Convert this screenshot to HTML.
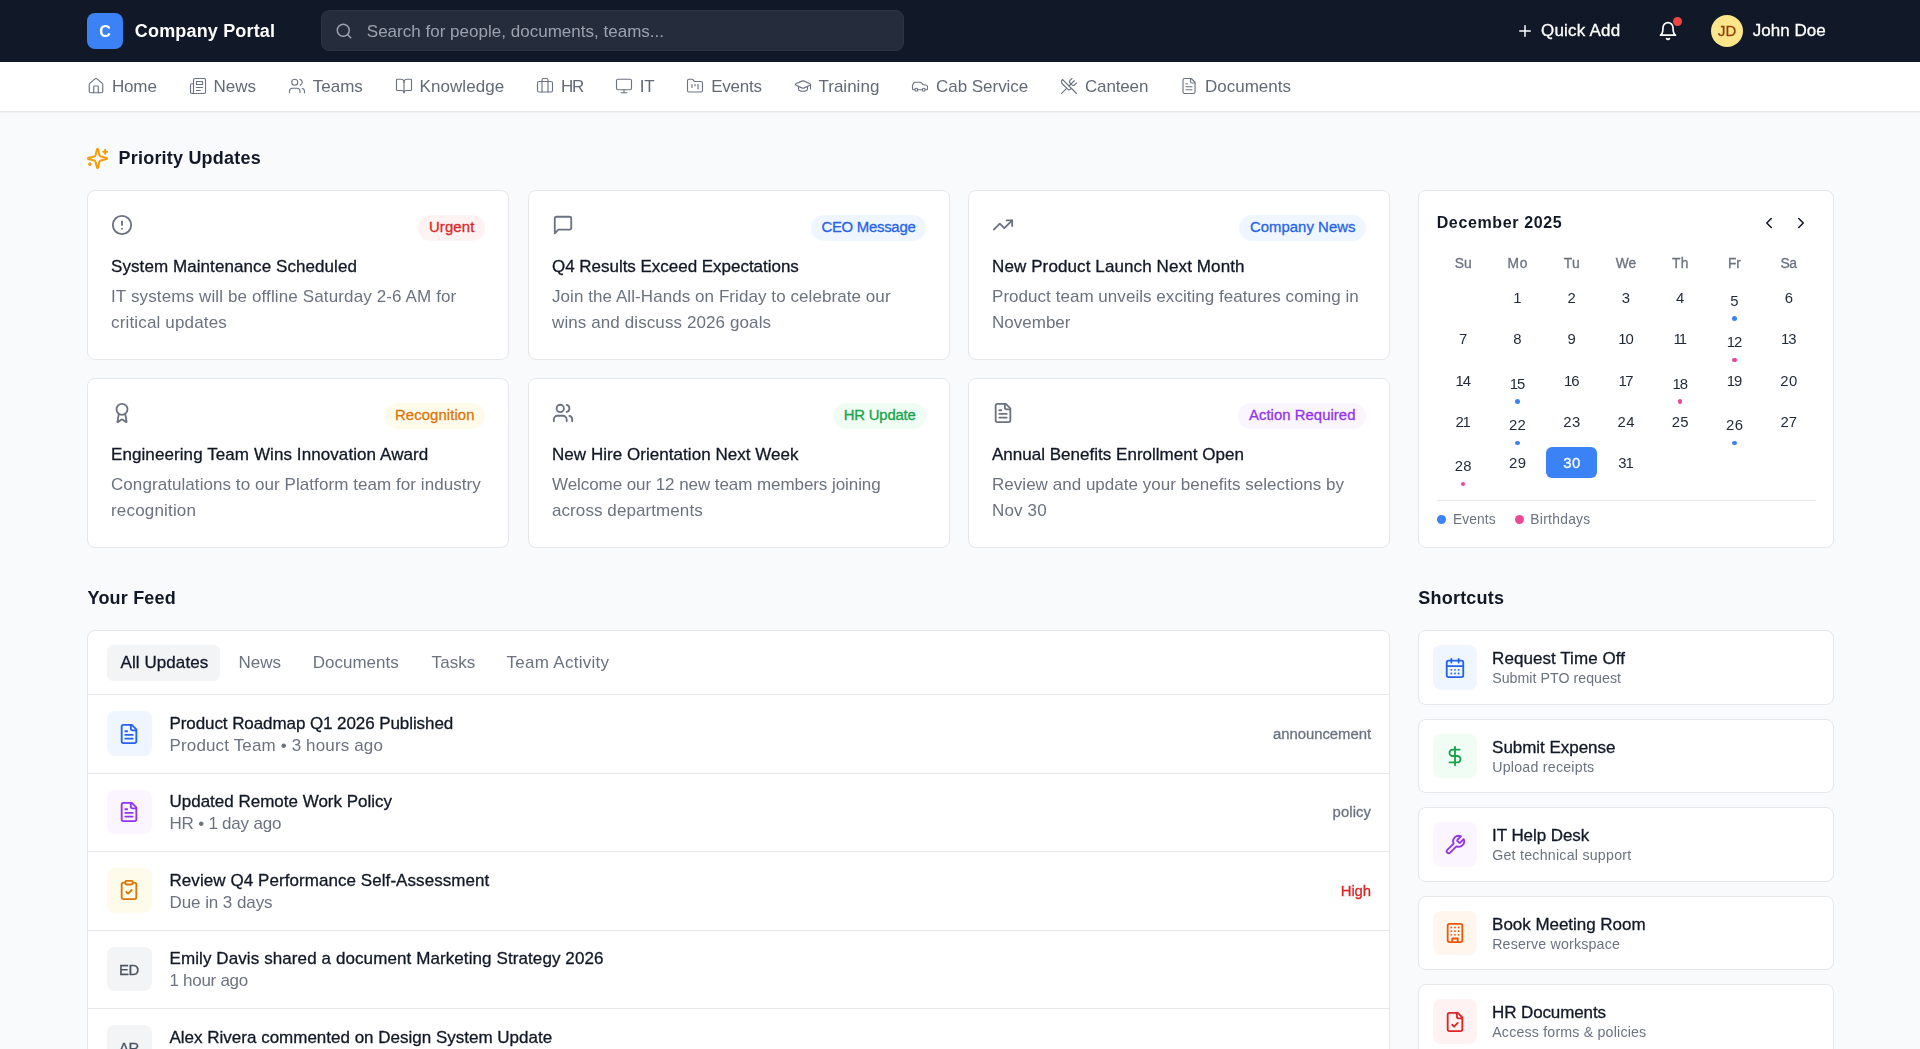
<!DOCTYPE html>
<html><head><meta charset="utf-8"><title>Company Portal</title>
<style>
html,body{margin:0;padding:0;width:1920px;height:1049px;overflow:hidden;background:#f8fafc;font-family:"Liberation Sans",sans-serif;}
#root{position:relative;width:1920px;height:1049px;overflow:hidden;}
#txt{position:absolute;left:0;top:0;width:1920px;height:1049px;will-change:transform;}
#root span{position:absolute;white-space:pre;font-family:"Liberation Sans",sans-serif;}
</style></head><body><div id="root">
<div style="position:absolute;left:0px;top:0px;width:1920px;height:62px;background:#111827;border-radius:0px;"></div>
<div style="position:absolute;left:87px;top:12.5px;width:36px;height:36px;background:#3b82f6;border-radius:8px;"></div>
<div style="position:absolute;left:321px;top:10px;width:583px;height:41px;background:#252c3c;border:1px solid #2b3344;box-sizing:border-box;border-radius:8px;"></div>
<svg style="position:absolute;left:335.0px;top:21.6px" width="18" height="18" viewBox="0 0 24 24" fill="none" stroke="#9ca3af" stroke-width="2" stroke-linecap="round" stroke-linejoin="round"><circle cx="11" cy="11" r="8"/><path d="m21 21-4.3-4.3"/></svg>
<svg style="position:absolute;left:1516.0px;top:21.7px" width="18" height="18" viewBox="0 0 24 24" fill="none" stroke="#ffffff" stroke-width="2" stroke-linecap="round" stroke-linejoin="round"><path d="M5 12h14"/><path d="M12 5v14"/></svg>
<svg style="position:absolute;left:1658.0px;top:21.0px" width="20" height="20" viewBox="0 0 24 24" fill="none" stroke="#ffffff" stroke-width="2" stroke-linecap="round" stroke-linejoin="round"><path d="M6 8a6 6 0 0 1 12 0c0 7 3 9 3 9H3s3-2 3-9"/><path d="M10.3 21a1.94 1.94 0 0 0 3.4 0"/></svg>
<div style="position:absolute;left:1672.9px;top:17.1px;width:9px;height:9px;background:#ef4444;border-radius:5px;"></div>
<div style="position:absolute;left:1711px;top:14.8px;width:32px;height:32px;background:#fde68a;border-radius:16px;"></div>
<div style="position:absolute;left:0px;top:62px;width:1920px;height:50px;background:#ffffff;border-radius:0px;"></div>
<div style="position:absolute;left:0px;top:111px;width:1920px;height:1px;background:#e5e7eb;border-radius:0px;"></div>
<div style="position:absolute;left:0px;top:112px;width:1920px;height:1px;background:#f1f2f4;border-radius:0px;"></div>
<svg style="position:absolute;left:87.1px;top:76.5px" width="18" height="18" viewBox="0 0 24 24" fill="none" stroke="#6b7280" stroke-width="1.5" stroke-linecap="round" stroke-linejoin="round"><path d="M15 21v-8a1 1 0 0 0-1-1h-4a1 1 0 0 0-1 1v8"/><path d="M3 10a2 2 0 0 1 .709-1.528l7-5.999a2 2 0 0 1 2.582 0l7 5.999A2 2 0 0 1 21 10v9a2 2 0 0 1-2 2H5a2 2 0 0 1-2-2z"/></svg>
<svg style="position:absolute;left:188.63px;top:76.5px" width="18" height="18" viewBox="0 0 24 24" fill="none" stroke="#6b7280" stroke-width="1.5" stroke-linecap="round" stroke-linejoin="round"><path d="M4 22h16a2 2 0 0 0 2-2V4a2 2 0 0 0-2-2H8a2 2 0 0 0-2 2v16a2 2 0 0 1-2 2Zm0 0a2 2 0 0 1-2-2v-9c0-1.1.9-2 2-2h2"/><path d="M18 14h-8"/><path d="M15 18h-5"/><path d="M10 6h8v4h-8V6Z"/></svg>
<svg style="position:absolute;left:287.97px;top:76.5px" width="18" height="18" viewBox="0 0 24 24" fill="none" stroke="#6b7280" stroke-width="1.5" stroke-linecap="round" stroke-linejoin="round"><path d="M16 21v-2a4 4 0 0 0-4-4H6a4 4 0 0 0-4 4v2"/><circle cx="9" cy="7" r="4"/><path d="M22 21v-2a4 4 0 0 0-3-3.87"/><path d="M16 3.13a4 4 0 0 1 0 7.75"/></svg>
<svg style="position:absolute;left:394.69000000000005px;top:76.5px" width="18" height="18" viewBox="0 0 24 24" fill="none" stroke="#6b7280" stroke-width="1.5" stroke-linecap="round" stroke-linejoin="round"><path d="M12 7v14"/><path d="M3 18a1 1 0 0 1-1-1V4a1 1 0 0 1 1-1h5a4 4 0 0 1 4 4 4 4 0 0 1 4-4h5a1 1 0 0 1 1 1v13a1 1 0 0 1-1 1h-6a3 3 0 0 0-3 3 3 3 0 0 0-3-3z"/></svg>
<svg style="position:absolute;left:536.1400000000001px;top:76.5px" width="18" height="18" viewBox="0 0 24 24" fill="none" stroke="#6b7280" stroke-width="1.5" stroke-linecap="round" stroke-linejoin="round"><path d="M16 20V4a2 2 0 0 0-2-2h-4a2 2 0 0 0-2 2v16"/><rect width="20" height="14" x="2" y="6" rx="2"/></svg>
<svg style="position:absolute;left:615.0300000000001px;top:76.5px" width="18" height="18" viewBox="0 0 24 24" fill="none" stroke="#6b7280" stroke-width="1.5" stroke-linecap="round" stroke-linejoin="round"><rect width="20" height="14" x="2" y="3" rx="2"/><line x1="8" x2="16" y1="21" y2="21"/><line x1="12" x2="12" y1="17" y2="21"/></svg>
<svg style="position:absolute;left:686.3500000000001px;top:76.5px" width="18" height="18" viewBox="0 0 24 24" fill="none" stroke="#6b7280" stroke-width="1.5" stroke-linecap="round" stroke-linejoin="round"><path d="M4 20h16a2 2 0 0 0 2-2V8a2 2 0 0 0-2-2h-7.93a2 2 0 0 1-1.66-.9l-.82-1.2A2 2 0 0 0 7.93 3H4a2 2 0 0 0-2 2v13c0 1.1.9 2 2 2Z"/><path d="M8 10v4"/><path d="M12 10v2"/><path d="M16 10v6"/></svg>
<svg style="position:absolute;left:793.6600000000001px;top:76.5px" width="18" height="18" viewBox="0 0 24 24" fill="none" stroke="#6b7280" stroke-width="1.5" stroke-linecap="round" stroke-linejoin="round"><path d="M21.42 10.922a1 1 0 0 0-.019-1.838L12.83 5.18a2 2 0 0 0-1.66 0L2.6 9.08a1 1 0 0 0 0 1.832l8.57 3.908a2 2 0 0 0 1.66 0z"/><path d="M22 10v6"/><path d="M6 12.5V16a6 3 0 0 0 12 0v-3.5"/></svg>
<svg style="position:absolute;left:911.2700000000001px;top:76.5px" width="18" height="18" viewBox="0 0 24 24" fill="none" stroke="#6b7280" stroke-width="1.5" stroke-linecap="round" stroke-linejoin="round"><path d="M19 17h2c.6 0 1-.4 1-1v-3c0-.9-.7-1.7-1.5-1.9C18.7 10.6 16 10 16 10s-1.3-1.4-2.2-2.3c-.5-.4-1.1-.7-1.8-.7H5c-.6 0-1.1.4-1.4.9l-1.4 2.9A3.7 3.7 0 0 0 2 12v4c0 .6.4 1 1 1h2"/><circle cx="7" cy="17" r="2"/><path d="M9 17h6"/><circle cx="17" cy="17" r="2"/></svg>
<svg style="position:absolute;left:1060.14px;top:76.5px" width="18" height="18" viewBox="0 0 24 24" fill="none" stroke="#6b7280" stroke-width="1.5" stroke-linecap="round" stroke-linejoin="round"><path d="m16 2-2.3 2.3a3 3 0 0 0 0 4.2l1.8 1.8a3 3 0 0 0 4.2 0L22 8"/><path d="M15 15 3.3 3.3a4.2 4.2 0 0 0 0 6l7.3 7.3c.7.7 2 .7 2.8 0L15 15Zm0 0 7 7"/><path d="m2.1 21.8 6.4-6.3"/><path d="m19 5-7 7"/></svg>
<svg style="position:absolute;left:1180.15px;top:76.5px" width="18" height="18" viewBox="0 0 24 24" fill="none" stroke="#6b7280" stroke-width="1.5" stroke-linecap="round" stroke-linejoin="round"><path d="M15 2H6a2 2 0 0 0-2 2v16a2 2 0 0 0 2 2h12a2 2 0 0 0 2-2V7Z"/><path d="M14 2v4a2 2 0 0 0 2 2h4"/><path d="M10 9H8"/><path d="M16 13H8"/><path d="M16 17H8"/></svg>
<svg style="position:absolute;left:86px;top:146.5px" width="23" height="23" viewBox="0 0 24 24" fill="none" stroke="#f59e0b" stroke-width="2.1" stroke-linecap="round" stroke-linejoin="round"><path d="M9.937 15.5A2 2 0 0 0 8.5 14.063l-6.135-1.582a.5.5 0 0 1 0-.962L8.5 9.936A2 2 0 0 0 9.937 8.5l1.582-6.135a.5.5 0 0 1 .963 0L14.063 8.5A2 2 0 0 0 15.5 9.937l6.135 1.581a.5.5 0 0 1 0 .964L15.5 14.063a2 2 0 0 0-1.437 1.437l-1.582 6.135a.5.5 0 0 1-.963 0z"/><path d="M20 3v4"/><path d="M22 5h-4"/><path d="M4 17v2"/><path d="M5 18H3"/></svg>
<div style="position:absolute;left:87px;top:190px;width:422px;height:170px;background:#ffffff;border:1px solid #e5e7eb;box-sizing:border-box;border-radius:8px;"></div>
<svg style="position:absolute;left:111px;top:214px" width="22" height="22" viewBox="0 0 24 24" fill="none" stroke="#6b7280" stroke-width="2" stroke-linecap="round" stroke-linejoin="round"><circle cx="12" cy="12" r="10"/><line x1="12" x2="12" y1="8" y2="12"/><line x1="12" x2="12.01" y1="16" y2="16"/></svg>
<div style="position:absolute;left:528px;top:190px;width:422px;height:170px;background:#ffffff;border:1px solid #e5e7eb;box-sizing:border-box;border-radius:8px;"></div>
<svg style="position:absolute;left:552px;top:214px" width="22" height="22" viewBox="0 0 24 24" fill="none" stroke="#6b7280" stroke-width="2" stroke-linecap="round" stroke-linejoin="round"><path d="M21 15a2 2 0 0 1-2 2H7l-4 4V5a2 2 0 0 1 2-2h14a2 2 0 0 1 2 2z"/></svg>
<div style="position:absolute;left:968px;top:190px;width:422px;height:170px;background:#ffffff;border:1px solid #e5e7eb;box-sizing:border-box;border-radius:8px;"></div>
<svg style="position:absolute;left:992px;top:214px" width="22" height="22" viewBox="0 0 24 24" fill="none" stroke="#6b7280" stroke-width="2" stroke-linecap="round" stroke-linejoin="round"><polyline points="22 7 13.5 15.5 8.5 10.5 2 17"/><polyline points="16 7 22 7 22 13"/></svg>
<div style="position:absolute;left:87px;top:378px;width:422px;height:170px;background:#ffffff;border:1px solid #e5e7eb;box-sizing:border-box;border-radius:8px;"></div>
<svg style="position:absolute;left:111px;top:402px" width="22" height="22" viewBox="0 0 24 24" fill="none" stroke="#6b7280" stroke-width="2" stroke-linecap="round" stroke-linejoin="round"><path d="m15.477 12.89 1.515 8.526a.5.5 0 0 1-.81.47l-3.58-2.687a1 1 0 0 0-1.197 0l-3.586 2.686a.5.5 0 0 1-.81-.469l1.514-8.526"/><circle cx="12" cy="8" r="6"/></svg>
<div style="position:absolute;left:528px;top:378px;width:422px;height:170px;background:#ffffff;border:1px solid #e5e7eb;box-sizing:border-box;border-radius:8px;"></div>
<svg style="position:absolute;left:552px;top:402px" width="22" height="22" viewBox="0 0 24 24" fill="none" stroke="#6b7280" stroke-width="2" stroke-linecap="round" stroke-linejoin="round"><path d="M16 21v-2a4 4 0 0 0-4-4H6a4 4 0 0 0-4 4v2"/><circle cx="9" cy="7" r="4"/><path d="M22 21v-2a4 4 0 0 0-3-3.87"/><path d="M16 3.13a4 4 0 0 1 0 7.75"/></svg>
<div style="position:absolute;left:968px;top:378px;width:422px;height:170px;background:#ffffff;border:1px solid #e5e7eb;box-sizing:border-box;border-radius:8px;"></div>
<svg style="position:absolute;left:992px;top:402px" width="22" height="22" viewBox="0 0 24 24" fill="none" stroke="#6b7280" stroke-width="2" stroke-linecap="round" stroke-linejoin="round"><path d="M15 2H6a2 2 0 0 0-2 2v16a2 2 0 0 0 2 2h12a2 2 0 0 0 2-2V7Z"/><path d="M14 2v4a2 2 0 0 0 2 2h4"/><path d="M10 9H8"/><path d="M16 13H8"/><path d="M16 17H8"/></svg>
<div style="position:absolute;left:1418px;top:190px;width:415.5px;height:358px;background:#ffffff;border:1px solid #e5e7eb;box-sizing:border-box;border-radius:8px;"></div>
<svg style="position:absolute;left:1760.0px;top:214.0px" width="18" height="18" viewBox="0 0 24 24" fill="none" stroke="#111827" stroke-width="2.1" stroke-linecap="round" stroke-linejoin="round"><path d="m15 18-6-6 6-6"/></svg>
<svg style="position:absolute;left:1792.0px;top:214.0px" width="18" height="18" viewBox="0 0 24 24" fill="none" stroke="#111827" stroke-width="2.1" stroke-linecap="round" stroke-linejoin="round"><path d="m9 18 6-6-6-6"/></svg>
<div style="position:absolute;left:1546px;top:447.3px;width:51.2px;height:31.2px;background:#3b82f6;border-radius:6px;"></div>
<div style="position:absolute;left:1732.25px;top:316.45px;width:4.5px;height:4.5px;background:#3b82f6;border-radius:3px;"></div>
<div style="position:absolute;left:1732.25px;top:357.85px;width:4.5px;height:4.5px;background:#ec4899;border-radius:3px;"></div>
<div style="position:absolute;left:1515.21px;top:399.25px;width:4.5px;height:4.5px;background:#3b82f6;border-radius:3px;"></div>
<div style="position:absolute;left:1677.99px;top:399.25px;width:4.5px;height:4.5px;background:#ec4899;border-radius:3px;"></div>
<div style="position:absolute;left:1515.21px;top:440.55px;width:4.5px;height:4.5px;background:#3b82f6;border-radius:3px;"></div>
<div style="position:absolute;left:1732.25px;top:440.55px;width:4.5px;height:4.5px;background:#3b82f6;border-radius:3px;"></div>
<div style="position:absolute;left:1460.95px;top:481.85px;width:4.5px;height:4.5px;background:#ec4899;border-radius:3px;"></div>
<div style="position:absolute;left:1436.5px;top:500px;width:379px;height:1px;background:#e5e7eb;border-radius:0px;"></div>
<div style="position:absolute;left:1437.2px;top:514.9px;width:9px;height:9px;background:#3b82f6;border-radius:5px;"></div>
<div style="position:absolute;left:1514.5px;top:514.9px;width:9px;height:9px;background:#ec4899;border-radius:5px;"></div>
<div style="position:absolute;left:87px;top:630px;width:1303px;height:600px;background:#ffffff;border:1px solid #e5e7eb;box-sizing:border-box;border-radius:8px;"></div>
<div style="position:absolute;left:107.2px;top:644.6px;width:112.9px;height:36px;background:#f3f4f6;border-radius:6px;"></div>
<div style="position:absolute;left:88px;top:694px;width:1301px;height:1px;background:#e5e7eb;border-radius:0px;"></div>
<div style="position:absolute;left:107px;top:711.4px;width:44.5px;height:44.5px;background:#eff6ff;border-radius:8px;"></div>
<svg style="position:absolute;left:118.25px;top:722.65px" width="22" height="22" viewBox="0 0 24 24" fill="none" stroke="#2563eb" stroke-width="2" stroke-linecap="round" stroke-linejoin="round"><path d="M15 2H6a2 2 0 0 0-2 2v16a2 2 0 0 0 2 2h12a2 2 0 0 0 2-2V7Z"/><path d="M14 2v4a2 2 0 0 0 2 2h4"/><path d="M10 9H8"/><path d="M16 13H8"/><path d="M16 17H8"/></svg>
<div style="position:absolute;left:88px;top:773px;width:1301px;height:1px;background:#e5e7eb;border-radius:0px;"></div>
<div style="position:absolute;left:107px;top:789.77px;width:44.5px;height:44.5px;background:#faf5ff;border-radius:8px;"></div>
<svg style="position:absolute;left:118.25px;top:801.02px" width="22" height="22" viewBox="0 0 24 24" fill="none" stroke="#9333ea" stroke-width="2" stroke-linecap="round" stroke-linejoin="round"><path d="M15 2H6a2 2 0 0 0-2 2v16a2 2 0 0 0 2 2h12a2 2 0 0 0 2-2V7Z"/><path d="M14 2v4a2 2 0 0 0 2 2h4"/><path d="M10 9H8"/><path d="M16 13H8"/><path d="M16 17H8"/></svg>
<div style="position:absolute;left:88px;top:851px;width:1301px;height:1px;background:#e5e7eb;border-radius:0px;"></div>
<div style="position:absolute;left:107px;top:868.14px;width:44.5px;height:44.5px;background:#fffbeb;border-radius:8px;"></div>
<svg style="position:absolute;left:118.25px;top:879.39px" width="22" height="22" viewBox="0 0 24 24" fill="none" stroke="#d97706" stroke-width="2" stroke-linecap="round" stroke-linejoin="round"><rect width="8" height="4" x="8" y="2" rx="1" ry="1"/><path d="M16 4h2a2 2 0 0 1 2 2v14a2 2 0 0 1-2 2H6a2 2 0 0 1-2-2V6a2 2 0 0 1 2-2h2"/><path d="m9 14 2 2 4-4"/></svg>
<div style="position:absolute;left:88px;top:930px;width:1301px;height:1px;background:#e5e7eb;border-radius:0px;"></div>
<div style="position:absolute;left:107px;top:946.51px;width:44.5px;height:44.5px;background:#f3f4f6;border-radius:8px;"></div>
<div style="position:absolute;left:88px;top:1008px;width:1301px;height:1px;background:#e5e7eb;border-radius:0px;"></div>
<div style="position:absolute;left:107px;top:1024.88px;width:44.5px;height:44.5px;background:#f3f4f6;border-radius:8px;"></div>
<div style="position:absolute;left:1418px;top:630.1px;width:415.5px;height:74.8px;background:#ffffff;border:1px solid #e5e7eb;box-sizing:border-box;border-radius:8px;"></div>
<div style="position:absolute;left:1432.8px;top:645.4px;width:44.2px;height:44.2px;background:#eff6ff;border-radius:8px;"></div>
<svg style="position:absolute;left:1443.9px;top:656.5px" width="22" height="22" viewBox="0 0 24 24" fill="none" stroke="#2563eb" stroke-width="2" stroke-linecap="round" stroke-linejoin="round"><path d="M8 2v4"/><path d="M16 2v4"/><rect width="18" height="18" x="3" y="4" rx="2"/><path d="M3 10h18"/><path d="M8 14h.01"/><path d="M12 14h.01"/><path d="M16 14h.01"/><path d="M8 18h.01"/><path d="M12 18h.01"/><path d="M16 18h.01"/></svg>
<div style="position:absolute;left:1418px;top:718.6px;width:415.5px;height:74.8px;background:#ffffff;border:1px solid #e5e7eb;box-sizing:border-box;border-radius:8px;"></div>
<div style="position:absolute;left:1432.8px;top:733.9px;width:44.2px;height:44.2px;background:#f0fdf4;border-radius:8px;"></div>
<svg style="position:absolute;left:1443.9px;top:745.0px" width="22" height="22" viewBox="0 0 24 24" fill="none" stroke="#16a34a" stroke-width="2" stroke-linecap="round" stroke-linejoin="round"><line x1="12" x2="12" y1="2" y2="22"/><path d="M17 5H9.5a3.5 3.5 0 0 0 0 7h5a3.5 3.5 0 0 1 0 7H6"/></svg>
<div style="position:absolute;left:1418px;top:807.1px;width:415.5px;height:74.8px;background:#ffffff;border:1px solid #e5e7eb;box-sizing:border-box;border-radius:8px;"></div>
<div style="position:absolute;left:1432.8px;top:822.4px;width:44.2px;height:44.2px;background:#faf5ff;border-radius:8px;"></div>
<svg style="position:absolute;left:1443.9px;top:833.5px" width="22" height="22" viewBox="0 0 24 24" fill="none" stroke="#9333ea" stroke-width="2" stroke-linecap="round" stroke-linejoin="round"><path d="M14.7 6.3a1 1 0 0 0 0 1.4l1.6 1.6a1 1 0 0 0 1.4 0l3.77-3.77a6 6 0 0 1-7.94 7.94l-6.91 6.91a2.12 2.12 0 0 1-3-3l6.91-6.91a6 6 0 0 1 7.94-7.94l-3.76 3.76z"/></svg>
<div style="position:absolute;left:1418px;top:895.6px;width:415.5px;height:74.8px;background:#ffffff;border:1px solid #e5e7eb;box-sizing:border-box;border-radius:8px;"></div>
<div style="position:absolute;left:1432.8px;top:910.9px;width:44.2px;height:44.2px;background:#fff7ed;border-radius:8px;"></div>
<svg style="position:absolute;left:1443.9px;top:922.0px" width="22" height="22" viewBox="0 0 24 24" fill="none" stroke="#ea580c" stroke-width="2" stroke-linecap="round" stroke-linejoin="round"><rect width="16" height="20" x="4" y="2" rx="2" ry="2"/><path d="M9 22v-4h6v4"/><path d="M8 6h.01"/><path d="M16 6h.01"/><path d="M12 6h.01"/><path d="M12 10h.01"/><path d="M12 14h.01"/><path d="M16 10h.01"/><path d="M16 14h.01"/><path d="M8 10h.01"/><path d="M8 14h.01"/></svg>
<div style="position:absolute;left:1418px;top:984.1px;width:415.5px;height:74.8px;background:#ffffff;border:1px solid #e5e7eb;box-sizing:border-box;border-radius:8px;"></div>
<div style="position:absolute;left:1432.8px;top:999.4px;width:44.2px;height:44.2px;background:#fef2f2;border-radius:8px;"></div>
<svg style="position:absolute;left:1443.9px;top:1010.5px" width="22" height="22" viewBox="0 0 24 24" fill="none" stroke="#dc2626" stroke-width="2" stroke-linecap="round" stroke-linejoin="round"><path d="M15 2H6a2 2 0 0 0-2 2v16a2 2 0 0 0 2 2h12a2 2 0 0 0 2-2V7Z"/><path d="M14 2v4a2 2 0 0 0 2 2h4"/><path d="m9 15 2 2 4-4"/></svg>
<div style="position:absolute;left:418.39px;top:214.5px;width:66.61px;height:26px;border-radius:13px;background:#fef2f2"></div>
<span style="left:428.89px;top:217.85px;font-size:14.875px;line-height:19px;color:#dc2626;letter-spacing:0.167px;-webkit-text-stroke:0.3px #dc2626">Urgent</span>
<div style="position:absolute;left:810.89px;top:214.5px;width:115.11px;height:26px;border-radius:13px;background:#eff6ff"></div>
<span style="left:821.39px;top:217.85px;font-size:14.875px;line-height:19px;color:#2563eb;letter-spacing:-0.229px;-webkit-text-stroke:0.3px #2563eb">CEO Message</span>
<div style="position:absolute;left:1239.38px;top:214.5px;width:126.62px;height:26px;border-radius:13px;background:#eff6ff"></div>
<span style="left:1249.88px;top:217.85px;font-size:14.875px;line-height:19px;color:#2563eb;letter-spacing:0.061px;-webkit-text-stroke:0.3px #2563eb">Company News</span>
<div style="position:absolute;left:384.56px;top:402.5px;width:100.44px;height:26px;border-radius:13px;background:#fffbeb"></div>
<span style="left:395.06px;top:405.85px;font-size:14.875px;line-height:19px;color:#d97706;letter-spacing:0.087px;-webkit-text-stroke:0.3px #d97706">Recognition</span>
<div style="position:absolute;left:833.30px;top:402.5px;width:92.70px;height:26px;border-radius:13px;background:#f0fdf4"></div>
<span style="left:843.80px;top:405.85px;font-size:14.875px;line-height:19px;color:#16a34a;letter-spacing:-0.201px;-webkit-text-stroke:0.3px #16a34a">HR Update</span>
<div style="position:absolute;left:1238.47px;top:402.5px;width:127.53px;height:26px;border-radius:13px;background:#faf5ff"></div>
<span style="left:1248.97px;top:405.85px;font-size:14.875px;line-height:19px;color:#9333ea;letter-spacing:0.053px;-webkit-text-stroke:0.3px #9333ea">Action Required</span>
<div id="txt">
<span style="left:99.22px;top:20.96px;font-size:16.00px;line-height:21px;font-weight:700;color:#ffffff;letter-spacing:1.234px;">C</span>
<span style="left:134.80px;top:19.76px;font-size:18.00px;line-height:23px;font-weight:700;color:#ffffff;letter-spacing:0.171px;">Company Portal</span>
<span style="left:366.80px;top:20.71px;font-size:17.00px;line-height:22px;font-weight:400;color:#9ca3af;letter-spacing:0.014px;">Search for people, documents, teams...</span>
<span style="left:1541.00px;top:20.01px;font-size:17.00px;line-height:22px;font-weight:400;color:#ffffff;letter-spacing:0.212px;-webkit-text-stroke:0.3px #ffffff;">Quick Add</span>
<span style="left:1718.02px;top:22.25px;font-size:14.88px;line-height:19px;font-weight:400;color:#92400e;letter-spacing:-0.008px;-webkit-text-stroke:0.3px #92400e;">JD</span>
<span style="left:1752.80px;top:20.26px;font-size:17.00px;line-height:22px;font-weight:400;color:#ffffff;letter-spacing:0.027px;-webkit-text-stroke:0.3px #ffffff;">John Doe</span>
<span style="left:111.90px;top:76.31px;font-size:17.00px;line-height:22px;font-weight:400;color:#636a76;letter-spacing:-0.133px;">Home</span>
<span style="left:213.43px;top:76.31px;font-size:17.00px;line-height:22px;font-weight:400;color:#636a76;letter-spacing:0.031px;">News</span>
<span style="left:312.77px;top:76.31px;font-size:17.00px;line-height:22px;font-weight:400;color:#636a76;letter-spacing:-0.013px;">Teams</span>
<span style="left:419.49px;top:76.31px;font-size:17.00px;line-height:22px;font-weight:400;color:#636a76;letter-spacing:0.069px;">Knowledge</span>
<span style="left:560.94px;top:76.31px;font-size:17.00px;line-height:22px;font-weight:400;color:#636a76;letter-spacing:-1.188px;">HR</span>
<span style="left:639.83px;top:76.31px;font-size:17.00px;line-height:22px;font-weight:400;color:#636a76;letter-spacing:-0.242px;">IT</span>
<span style="left:711.15px;top:76.31px;font-size:17.00px;line-height:22px;font-weight:400;color:#636a76;letter-spacing:-0.229px;">Events</span>
<span style="left:818.46px;top:76.31px;font-size:17.00px;line-height:22px;font-weight:400;color:#636a76;letter-spacing:0.014px;">Training</span>
<span style="left:936.07px;top:76.31px;font-size:17.00px;line-height:22px;font-weight:400;color:#636a76;letter-spacing:-0.040px;">Cab Service</span>
<span style="left:1084.94px;top:76.31px;font-size:17.00px;line-height:22px;font-weight:400;color:#636a76;letter-spacing:-0.138px;">Canteen</span>
<span style="left:1204.95px;top:76.31px;font-size:17.00px;line-height:22px;font-weight:400;color:#636a76;letter-spacing:0.009px;">Documents</span>
<span style="left:118.60px;top:146.61px;font-size:18.00px;line-height:23px;font-weight:700;color:#111827;letter-spacing:0.201px;">Priority Updates</span>
<span style="left:111.00px;top:256.31px;font-size:17.00px;line-height:22px;font-weight:400;color:#111827;letter-spacing:0.079px;-webkit-text-stroke:0.3px #111827;">System Maintenance Scheduled</span>
<span style="left:111.00px;top:286.01px;font-size:17.00px;line-height:22px;font-weight:400;color:#6b7280;letter-spacing:0.128px;">IT systems will be offline Saturday 2-6 AM for</span>
<span style="left:111.00px;top:312.01px;font-size:17.00px;line-height:22px;font-weight:400;color:#6b7280;letter-spacing:0.160px;">critical updates</span>
<span style="left:552.00px;top:256.31px;font-size:17.00px;line-height:22px;font-weight:400;color:#111827;letter-spacing:-0.026px;-webkit-text-stroke:0.3px #111827;">Q4 Results Exceed Expectations</span>
<span style="left:552.00px;top:286.01px;font-size:17.00px;line-height:22px;font-weight:400;color:#6b7280;letter-spacing:0.070px;">Join the All-Hands on Friday to celebrate our</span>
<span style="left:552.00px;top:312.01px;font-size:17.00px;line-height:22px;font-weight:400;color:#6b7280;letter-spacing:0.100px;">wins and discuss 2026 goals</span>
<span style="left:992.00px;top:256.31px;font-size:17.00px;line-height:22px;font-weight:400;color:#111827;letter-spacing:0.108px;-webkit-text-stroke:0.3px #111827;">New Product Launch Next Month</span>
<span style="left:992.00px;top:286.01px;font-size:17.00px;line-height:22px;font-weight:400;color:#6b7280;letter-spacing:0.042px;">Product team unveils exciting features coming in</span>
<span style="left:992.00px;top:312.01px;font-size:17.00px;line-height:22px;font-weight:400;color:#6b7280;letter-spacing:0.012px;">November</span>
<span style="left:111.00px;top:444.31px;font-size:17.00px;line-height:22px;font-weight:400;color:#111827;letter-spacing:0.086px;-webkit-text-stroke:0.3px #111827;">Engineering Team Wins Innovation Award</span>
<span style="left:111.00px;top:474.01px;font-size:17.00px;line-height:22px;font-weight:400;color:#6b7280;letter-spacing:0.067px;">Congratulations to our Platform team for industry</span>
<span style="left:111.00px;top:500.01px;font-size:17.00px;line-height:22px;font-weight:400;color:#6b7280;letter-spacing:0.178px;">recognition</span>
<span style="left:552.00px;top:444.31px;font-size:17.00px;line-height:22px;font-weight:400;color:#111827;letter-spacing:0.044px;-webkit-text-stroke:0.3px #111827;">New Hire Orientation Next Week</span>
<span style="left:552.00px;top:474.01px;font-size:17.00px;line-height:22px;font-weight:400;color:#6b7280;letter-spacing:-0.070px;">Welcome our 12 new team members joining</span>
<span style="left:552.00px;top:500.01px;font-size:17.00px;line-height:22px;font-weight:400;color:#6b7280;letter-spacing:0.082px;">across departments</span>
<span style="left:992.00px;top:444.31px;font-size:17.00px;line-height:22px;font-weight:400;color:#111827;letter-spacing:0.016px;-webkit-text-stroke:0.3px #111827;">Annual Benefits Enrollment Open</span>
<span style="left:992.00px;top:474.01px;font-size:17.00px;line-height:22px;font-weight:400;color:#6b7280;letter-spacing:0.030px;">Review and update your benefits selections by</span>
<span style="left:992.00px;top:500.01px;font-size:17.00px;line-height:22px;font-weight:400;color:#6b7280;letter-spacing:0.156px;">Nov 30</span>
<span style="left:1436.70px;top:211.96px;font-size:16.00px;line-height:21px;font-weight:700;color:#111827;letter-spacing:0.629px;">December 2025</span>
<span style="left:1454.78px;top:254.11px;font-size:13.81px;line-height:18px;font-weight:400;color:#6b7280;letter-spacing:-0.052px;-webkit-text-stroke:0.3px #6b7280;">Su</span>
<span style="left:1507.56px;top:254.11px;font-size:13.81px;line-height:18px;font-weight:400;color:#6b7280;letter-spacing:0.619px;-webkit-text-stroke:0.3px #6b7280;">Mo</span>
<span style="left:1563.85px;top:254.11px;font-size:13.81px;line-height:18px;font-weight:400;color:#6b7280;letter-spacing:0.152px;-webkit-text-stroke:0.3px #6b7280;">Tu</span>
<span style="left:1615.68px;top:254.11px;font-size:13.81px;line-height:18px;font-weight:400;color:#6b7280;letter-spacing:0.140px;-webkit-text-stroke:0.3px #6b7280;">We</span>
<span style="left:1671.99px;top:254.11px;font-size:13.81px;line-height:18px;font-weight:400;color:#6b7280;letter-spacing:0.387px;-webkit-text-stroke:0.3px #6b7280;">Th</span>
<span style="left:1728.04px;top:254.11px;font-size:13.81px;line-height:18px;font-weight:400;color:#6b7280;letter-spacing:-0.120px;-webkit-text-stroke:0.3px #6b7280;">Fr</span>
<span style="left:1780.45px;top:254.11px;font-size:13.81px;line-height:18px;font-weight:400;color:#6b7280;letter-spacing:-0.279px;-webkit-text-stroke:0.3px #6b7280;">Sa</span>
<span style="left:1513.33px;top:288.75px;font-size:14.88px;line-height:19px;font-weight:400;color:#1f2937;letter-spacing:-2.562px;">1</span>
<span style="left:1567.59px;top:288.75px;font-size:14.88px;line-height:19px;font-weight:400;color:#1f2937;letter-spacing:0.281px;">2</span>
<span style="left:1621.85px;top:288.75px;font-size:14.88px;line-height:19px;font-weight:400;color:#1f2937;letter-spacing:0.391px;">3</span>
<span style="left:1676.11px;top:288.75px;font-size:14.88px;line-height:19px;font-weight:400;color:#1f2937;letter-spacing:0.781px;">4</span>
<span style="left:1730.37px;top:291.95px;font-size:14.88px;line-height:19px;font-weight:400;color:#1f2937;letter-spacing:0.250px;">5</span>
<span style="left:1784.63px;top:288.75px;font-size:14.88px;line-height:19px;font-weight:400;color:#1f2937;letter-spacing:0.422px;">6</span>
<span style="left:1459.07px;top:330.15px;font-size:14.88px;line-height:19px;font-weight:400;color:#1f2937;letter-spacing:-0.328px;">7</span>
<span style="left:1513.33px;top:330.15px;font-size:14.88px;line-height:19px;font-weight:400;color:#1f2937;letter-spacing:0.406px;">8</span>
<span style="left:1567.59px;top:330.15px;font-size:14.88px;line-height:19px;font-weight:400;color:#1f2937;letter-spacing:0.422px;">9</span>
<span style="left:1618.21px;top:330.15px;font-size:14.88px;line-height:19px;font-weight:400;color:#1f2937;letter-spacing:-1.000px;">10</span>
<span style="left:1673.53px;top:330.15px;font-size:14.88px;line-height:19px;font-weight:400;color:#1f2937;letter-spacing:-2.023px;">11</span>
<span style="left:1726.81px;top:333.35px;font-size:14.88px;line-height:19px;font-weight:400;color:#1f2937;letter-spacing:-1.148px;">12</span>
<span style="left:1781.04px;top:330.15px;font-size:14.88px;line-height:19px;font-weight:400;color:#1f2937;letter-spacing:-1.094px;">13</span>
<span style="left:1455.38px;top:371.55px;font-size:14.88px;line-height:19px;font-weight:400;color:#1f2937;letter-spacing:-0.891px;">14</span>
<span style="left:1509.77px;top:374.75px;font-size:14.88px;line-height:19px;font-weight:400;color:#1f2937;letter-spacing:-1.156px;">15</span>
<span style="left:1563.99px;top:371.55px;font-size:14.88px;line-height:19px;font-weight:400;color:#1f2937;letter-spacing:-1.070px;">16</span>
<span style="left:1618.44px;top:371.55px;font-size:14.88px;line-height:19px;font-weight:400;color:#1f2937;letter-spacing:-1.453px;">17</span>
<span style="left:1672.52px;top:374.75px;font-size:14.88px;line-height:19px;font-weight:400;color:#1f2937;letter-spacing:-1.086px;">18</span>
<span style="left:1726.77px;top:371.55px;font-size:14.88px;line-height:19px;font-weight:400;color:#1f2937;letter-spacing:-1.070px;">19</span>
<span style="left:1780.28px;top:371.55px;font-size:14.88px;line-height:19px;font-weight:400;color:#1f2937;letter-spacing:0.422px;">20</span>
<span style="left:1455.51px;top:412.85px;font-size:14.88px;line-height:19px;font-weight:400;color:#1f2937;letter-spacing:-1.148px;">21</span>
<span style="left:1509.06px;top:416.05px;font-size:14.88px;line-height:19px;font-weight:400;color:#1f2937;letter-spacing:0.273px;">22</span>
<span style="left:1563.29px;top:412.85px;font-size:14.88px;line-height:19px;font-weight:400;color:#1f2937;letter-spacing:0.328px;">23</span>
<span style="left:1617.50px;top:412.85px;font-size:14.88px;line-height:19px;font-weight:400;color:#1f2937;letter-spacing:0.422px;">24</span>
<span style="left:1671.84px;top:412.85px;font-size:14.88px;line-height:19px;font-weight:400;color:#1f2937;letter-spacing:0.266px;">25</span>
<span style="left:1726.06px;top:416.05px;font-size:14.88px;line-height:19px;font-weight:400;color:#1f2937;letter-spacing:0.352px;">26</span>
<span style="left:1780.51px;top:412.85px;font-size:14.88px;line-height:19px;font-weight:400;color:#1f2937;letter-spacing:-0.031px;">27</span>
<span style="left:1454.77px;top:457.35px;font-size:14.88px;line-height:19px;font-weight:400;color:#1f2937;letter-spacing:0.336px;">28</span>
<span style="left:1509.02px;top:454.15px;font-size:14.88px;line-height:19px;font-weight:400;color:#1f2937;letter-spacing:0.352px;">29</span>
<span style="left:1563.13px;top:453.65px;font-size:14.88px;line-height:19px;font-weight:400;color:#ffffff;letter-spacing:0.648px;-webkit-text-stroke:0.3px #ffffff;">30</span>
<span style="left:1618.26px;top:454.15px;font-size:14.88px;line-height:19px;font-weight:400;color:#1f2937;letter-spacing:-1.094px;">31</span>
<span style="left:1453.00px;top:510.31px;font-size:13.81px;line-height:18px;font-weight:400;color:#6b7280;letter-spacing:0.102px;">Events</span>
<span style="left:1530.30px;top:510.31px;font-size:13.81px;line-height:18px;font-weight:400;color:#6b7280;letter-spacing:0.298px;">Birthdays</span>
<span style="left:87.60px;top:586.76px;font-size:18.00px;line-height:23px;font-weight:700;color:#111827;letter-spacing:0.174px;">Your Feed</span>
<span style="left:120.60px;top:652.11px;font-size:17.00px;line-height:22px;font-weight:400;color:#111827;letter-spacing:0.068px;-webkit-text-stroke:0.3px #111827;">All Updates</span>
<span style="left:238.50px;top:652.11px;font-size:17.00px;line-height:22px;font-weight:400;color:#6b7280;letter-spacing:0.031px;">News</span>
<span style="left:312.70px;top:652.11px;font-size:17.00px;line-height:22px;font-weight:400;color:#6b7280;letter-spacing:0.009px;">Documents</span>
<span style="left:431.60px;top:652.11px;font-size:17.00px;line-height:22px;font-weight:400;color:#6b7280;letter-spacing:0.069px;">Tasks</span>
<span style="left:506.60px;top:652.11px;font-size:17.00px;line-height:22px;font-weight:400;color:#6b7280;letter-spacing:0.274px;">Team Activity</span>
<span style="left:169.50px;top:713.11px;font-size:17.00px;line-height:22px;font-weight:400;color:#111827;letter-spacing:-0.082px;-webkit-text-stroke:0.3px #111827;">Product Roadmap Q1 2026 Published</span>
<span style="left:169.50px;top:735.01px;font-size:17.00px;line-height:22px;font-weight:400;color:#6b7280;letter-spacing:0.145px;">Product Team • 3 hours ago</span>
<span style="left:1272.97px;top:724.85px;font-size:14.88px;line-height:19px;font-weight:400;color:#6b7280;letter-spacing:-0.027px;-webkit-text-stroke:0.3px #6b7280;">announcement</span>
<span style="left:169.50px;top:791.48px;font-size:17.00px;line-height:22px;font-weight:400;color:#111827;letter-spacing:-0.006px;-webkit-text-stroke:0.3px #111827;">Updated Remote Work Policy</span>
<span style="left:169.50px;top:813.38px;font-size:17.00px;line-height:22px;font-weight:400;color:#6b7280;letter-spacing:-0.215px;">HR • 1 day ago</span>
<span style="left:1332.58px;top:803.22px;font-size:14.88px;line-height:19px;font-weight:400;color:#6b7280;letter-spacing:0.083px;-webkit-text-stroke:0.3px #6b7280;">policy</span>
<span style="left:169.50px;top:869.85px;font-size:17.00px;line-height:22px;font-weight:400;color:#111827;letter-spacing:0.065px;-webkit-text-stroke:0.3px #111827;">Review Q4 Performance Self-Assessment</span>
<span style="left:169.50px;top:891.75px;font-size:17.00px;line-height:22px;font-weight:400;color:#6b7280;letter-spacing:-0.071px;">Due in 3 days</span>
<span style="left:1340.86px;top:881.59px;font-size:14.88px;line-height:19px;font-weight:400;color:#dc2626;letter-spacing:-0.141px;-webkit-text-stroke:0.3px #dc2626;">High</span>
<span style="left:118.99px;top:961.01px;font-size:14.88px;line-height:19px;font-weight:400;color:#4b5563;letter-spacing:-0.428px;-webkit-text-stroke:0.3px #4b5563;">ED</span>
<span style="left:169.50px;top:948.22px;font-size:17.00px;line-height:22px;font-weight:400;color:#111827;letter-spacing:0.096px;-webkit-text-stroke:0.3px #111827;">Emily Davis shared a document Marketing Strategy 2026</span>
<span style="left:169.50px;top:970.12px;font-size:17.00px;line-height:22px;font-weight:400;color:#6b7280;letter-spacing:-0.286px;">1 hour ago</span>
<span style="left:118.99px;top:1039.38px;font-size:14.88px;line-height:19px;font-weight:400;color:#4b5563;letter-spacing:-0.428px;-webkit-text-stroke:0.3px #4b5563;">AR</span>
<span style="left:169.50px;top:1026.59px;font-size:17.00px;line-height:22px;font-weight:400;color:#111827;letter-spacing:-0.001px;-webkit-text-stroke:0.3px #111827;">Alex Rivera commented on Design System Update</span>
<span style="left:169.50px;top:1048.49px;font-size:17.00px;line-height:22px;font-weight:400;color:#6b7280;letter-spacing:0.031px;">2 hours ago</span>
<span style="left:1418.30px;top:586.51px;font-size:18.00px;line-height:23px;font-weight:700;color:#111827;letter-spacing:0.214px;">Shortcuts</span>
<span style="left:1492.10px;top:648.11px;font-size:17.00px;line-height:22px;font-weight:400;color:#111827;letter-spacing:0.059px;-webkit-text-stroke:0.3px #111827;">Request Time Off</span>
<span style="left:1492.20px;top:669.48px;font-size:14.20px;line-height:18px;font-weight:400;color:#6b7280;letter-spacing:0.029px;">Submit PTO request</span>
<span style="left:1492.10px;top:736.61px;font-size:17.00px;line-height:22px;font-weight:400;color:#111827;letter-spacing:-0.036px;-webkit-text-stroke:0.3px #111827;">Submit Expense</span>
<span style="left:1492.20px;top:757.98px;font-size:14.20px;line-height:18px;font-weight:400;color:#6b7280;letter-spacing:0.242px;">Upload receipts</span>
<span style="left:1492.10px;top:825.11px;font-size:17.00px;line-height:22px;font-weight:400;color:#111827;letter-spacing:-0.073px;-webkit-text-stroke:0.3px #111827;">IT Help Desk</span>
<span style="left:1492.20px;top:846.48px;font-size:14.20px;line-height:18px;font-weight:400;color:#6b7280;letter-spacing:0.247px;">Get technical support</span>
<span style="left:1492.10px;top:913.61px;font-size:17.00px;line-height:22px;font-weight:400;color:#111827;letter-spacing:-0.036px;-webkit-text-stroke:0.3px #111827;">Book Meeting Room</span>
<span style="left:1492.20px;top:934.98px;font-size:14.20px;line-height:18px;font-weight:400;color:#6b7280;letter-spacing:0.190px;">Reserve workspace</span>
<span style="left:1492.10px;top:1002.11px;font-size:17.00px;line-height:22px;font-weight:400;color:#111827;letter-spacing:-0.124px;-webkit-text-stroke:0.3px #111827;">HR Documents</span>
<span style="left:1492.20px;top:1023.48px;font-size:14.20px;line-height:18px;font-weight:400;color:#6b7280;letter-spacing:0.191px;">Access forms &amp; policies</span>
</div>

</div></body></html>
